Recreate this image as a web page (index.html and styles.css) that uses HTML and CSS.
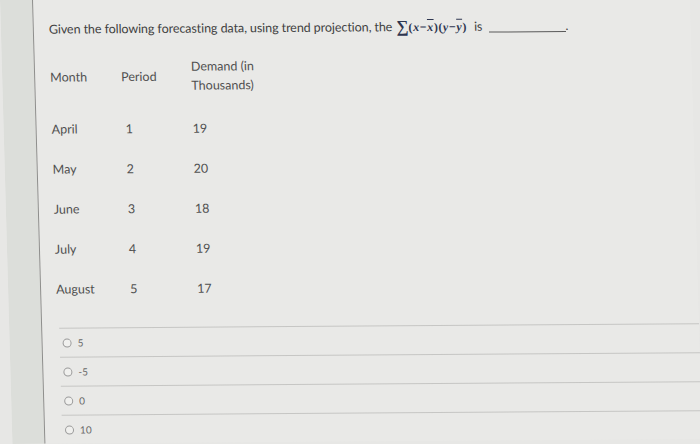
FILE: index.html
```html
<!DOCTYPE html>
<html>
<head>
<meta charset="utf-8">
<link rel="stylesheet" href="styles.css">
</head>
<body>
<div class="page">
  <div class="gutter"></div>
  <div class="main">
    <p class="question">Given the following forecasting data, using trend projection, the <span class="math"><span class="sigma">∑</span><span class="expr">(<i>x</i>−<i class="bar">x</i>)(<i>y</i>−<i class="bar">y</i>)</span></span> is <span class="blank"></span>.</p>

    <div class="table">
      <div class="cell head">Month</div>
      <div class="cell head">Period</div>
      <div class="cell head">Demand (in<br>Thousands)</div>

      <div class="cell">April</div><div class="cell num">1</div><div class="cell">19</div>
      <div class="cell">May</div><div class="cell num">2</div><div class="cell">20</div>
      <div class="cell">June</div><div class="cell num">3</div><div class="cell">18</div>
      <div class="cell">July</div><div class="cell num">4</div><div class="cell">19</div>
      <div class="cell">August</div><div class="cell num">5</div><div class="cell">17</div>
    </div>

    <ul class="options">
      <li class="option"><span class="radio"></span>5</li>
      <li class="option"><span class="radio"></span>-5</li>
      <li class="option"><span class="radio"></span>0</li>
      <li class="option"><span class="radio"></span>10</li>
    </ul>
  </div>
</div>
</body>
</html>
```

FILE: styles.css
```css
html, body {
  margin: 0;
  padding: 0;
  background: #e7e7e5;
  overflow: hidden;
}

.page {
  display: flex;
  width: 690px;
  height: 444px;
  overflow: hidden;
  transform: skew(1.6deg, -0.4deg);
  transform-origin: 0 0;
  font-family: Lato, "Open Sans", sans-serif;
  color: #4f4f4f;
}

.gutter {
  width: 32px;
  flex: none;
  background: #dcdeda;
}

.main {
  flex: 1;
  border-left: 1px solid #8e8e8c;
  background: #e9e9e7;
  padding-left: 15px;
  padding-top: 21px;
}

.question {
  margin: 0;
  font-size: 12.5px;
  line-height: 18px;
  color: #404040;
  letter-spacing: -0.07px;
  white-space: nowrap;
}

.math {
  font-family: "Liberation Serif", "DejaVu Serif", serif;
  color: #2e3650;
  font-weight: bold;
  margin-left: 1px;
}

.sigma {
  font-size: 17px;
  vertical-align: -1px;
}

.expr {
  font-size: 12px;
  letter-spacing: 0.6px;
  margin-right: 4px;
}

.bar {
  text-decoration: overline;
}

.blank {
  display: inline-block;
  width: 77px;
  border-bottom: 1px solid #5a5a5a;
  margin-left: 3px;
  vertical-align: -2px;
}

.table {
  display: grid;
  grid-template-columns: 71px 70px 120px;
  grid-template-rows: 51px repeat(5, 40px);
  margin-top: 19px;
  font-size: 12.5px;
  color: #505050;
}

.cell {
  display: flex;
  align-items: center;
  line-height: 19px;
}

.head {
  height: 38px;
  align-self: start;
}

.num {
  padding-left: 3px;
}

.options {
  list-style: none;
  margin: 19px 0 0 2px;
  padding: 0;
}

.option {
  display: flex;
  align-items: center;
  height: 28px;
  border-top: 1px solid #c6c6c4;
  font-size: 10px;
  color: #6a6a6a;
  padding-left: 3px;
}

.radio {
  width: 7px;
  height: 7px;
  border: 1.5px solid #9a9a9a;
  border-radius: 50%;
  margin-right: 6px;
  background: #f0f0ee;
}
```
